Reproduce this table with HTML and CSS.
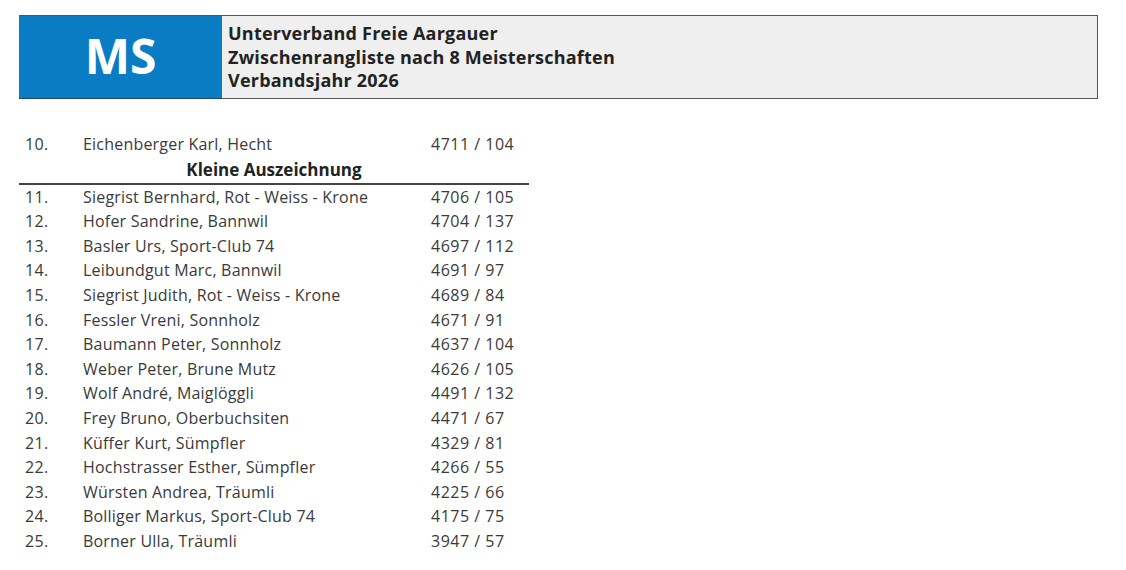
FILE: index.html
```html
<!DOCTYPE html>
<html lang="de">
<head>
<meta charset="utf-8">
<title>Zwischenrangliste</title>
<link rel="stylesheet" href="styles.css">
</head>
<body>
<header class="head">
  <div class="logo">MS</div>
  <div class="titles">
    <div>Unterverband Freie Aargauer</div>
    <div>Zwischenrangliste nach 8 Meisterschaften</div>
    <div>Verbandsjahr 2026</div>
  </div>
</header>
<main class="list">
  <div class="row"><span class="rank">10.</span><span class="name">Eichenberger Karl, Hecht</span><span class="score">4711 / 104</span></div>
  <div class="section">Kleine Auszeichnung</div>
  <div class="row"><span class="rank">11.</span><span class="name">Siegrist Bernhard, Rot - Weiss - Krone</span><span class="score">4706 / 105</span></div>
  <div class="row"><span class="rank">12.</span><span class="name">Hofer Sandrine, Bannwil</span><span class="score">4704 / 137</span></div>
  <div class="row"><span class="rank">13.</span><span class="name">Basler Urs, Sport-Club 74</span><span class="score">4697 / 112</span></div>
  <div class="row"><span class="rank">14.</span><span class="name">Leibundgut Marc, Bannwil</span><span class="score">4691 / 97</span></div>
  <div class="row"><span class="rank">15.</span><span class="name">Siegrist Judith, Rot - Weiss - Krone</span><span class="score">4689 / 84</span></div>
  <div class="row"><span class="rank">16.</span><span class="name">Fessler Vreni, Sonnholz</span><span class="score">4671 / 91</span></div>
  <div class="row"><span class="rank">17.</span><span class="name">Baumann Peter, Sonnholz</span><span class="score">4637 / 104</span></div>
  <div class="row"><span class="rank">18.</span><span class="name">Weber Peter, Brune Mutz</span><span class="score">4626 / 105</span></div>
  <div class="row"><span class="rank">19.</span><span class="name">Wolf André, Maiglöggli</span><span class="score">4491 / 132</span></div>
  <div class="row"><span class="rank">20.</span><span class="name">Frey Bruno, Oberbuchsiten</span><span class="score">4471 / 67</span></div>
  <div class="row"><span class="rank">21.</span><span class="name">Küffer Kurt, Sümpfler</span><span class="score">4329 / 81</span></div>
  <div class="row"><span class="rank">22.</span><span class="name">Hochstrasser Esther, Sümpfler</span><span class="score">4266 / 55</span></div>
  <div class="row"><span class="rank">23.</span><span class="name">Würsten Andrea, Träumli</span><span class="score">4225 / 66</span></div>
  <div class="row"><span class="rank">24.</span><span class="name">Bolliger Markus, Sport-Club 74</span><span class="score">4175 / 75</span></div>
  <div class="row"><span class="rank">25.</span><span class="name">Borner Ulla, Träumli</span><span class="score">3947 / 57</span></div>
</main>
</body>
</html>
```
FILE: styles.css
```css
html, body {
  margin: 0;
  padding: 0;
  background: #ffffff;
}
body {
  font-family: "Open Sans", "Liberation Sans", sans-serif;
  color: #3a3a3a;
}
.head {
  display: flex;
  margin: 15px 0 0 19px;
  width: 1079px;
  height: 84px;
  box-sizing: border-box;
  border: 1px solid #555555;
  background: #efefef;
}
.logo {
  width: 203px;
  background: #0a7cc3;
  border-bottom: 1px solid #1c4a70;
  margin: 0 0 -1px -1px;
  color: #ffffff;
  font-weight: 700;
  font-size: 48px;
  display: flex;
  align-items: center;
  justify-content: center;
  padding-bottom: 4px;
  box-sizing: border-box;
}
.titles {
  padding: 6px 0 0 6px;
  font-weight: 700;
  font-size: 18px;
  letter-spacing: 0.22px;
  line-height: 23.5px;
  color: #222222;
}
.list {
  margin: 33px 0 0 19px;
  width: 510px;
  font-size: 16px;
}
.row {
  display: flex;
  height: 24.6px;
  line-height: 24.6px;
  white-space: nowrap;
}
.rank {
  width: 64px;
  padding-left: 6px;
  box-sizing: border-box;
  letter-spacing: 0.4px;
}
.name {
  width: 348px;
  letter-spacing: 0.2px;
}
.score {
  flex: 1;
  letter-spacing: 0.5px;
}
.section {
  text-align: center;
  font-weight: 700;
  font-size: 17px;
  height: 26px;
  line-height: 26px;
  border-bottom: 2px solid #444444;
  color: #222222;
}
```
